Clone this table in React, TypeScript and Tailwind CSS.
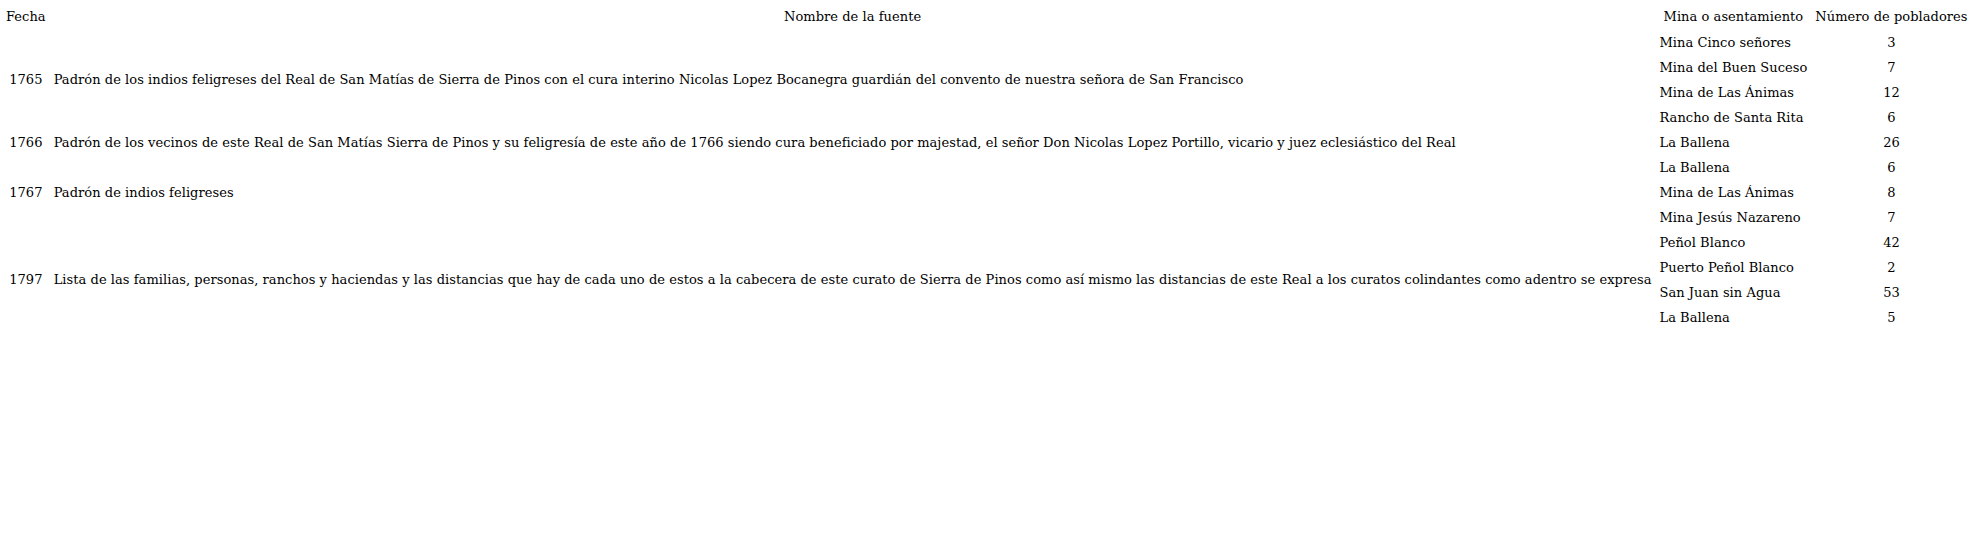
import React from "react";

type Row = { place: string; n: string };
type Group = { year: string; title: string; rows: Row[] };

const groups: Group[] = [
  {
    year: "1765",
    title:
      "Padrón de los indios feligreses del Real de San Matías de Sierra de Pinos con el cura interino Nicolas Lopez Bocanegra guardián del convento de nuestra señora de San Francisco",
    rows: [
      { place: "Mina Cinco señores", n: "3" },
      { place: "Mina del Buen Suceso", n: "7" },
      { place: "Mina de Las Ánimas", n: "12" },
      { place: "Rancho de Santa Rita", n: "6" },
    ],
  },
  {
    year: "1766",
    title:
      "Padrón de los vecinos de este Real de San Matías Sierra de Pinos y su feligresía de este año de 1766 siendo cura beneficiado por majestad, el señor Don Nicolas Lopez Portillo, vicario y juez eclesiástico del Real",
    rows: [{ place: "La Ballena", n: "26" }],
  },
  {
    year: "1767",
    title: "Padrón de indios feligreses",
    rows: [
      { place: "La Ballena", n: "6" },
      { place: "Mina de Las Ánimas", n: "8" },
      { place: "Mina Jesús Nazareno", n: "7" },
    ],
  },
  {
    year: "1797",
    title:
      "Lista de las familias, personas, ranchos y haciendas y las distancias que hay de cada uno de estos a la cabecera de este curato de Sierra de Pinos como así mismo las distancias de este Real a los curatos colindantes como adentro se expresa",
    rows: [
      { place: "Peñol Blanco", n: "42" },
      { place: "Puerto Peñol Blanco", n: "2" },
      { place: "San Juan sin Agua", n: "53" },
      { place: "La Ballena", n: "5" },
    ],
  },
];

export default function App() {
  return (
    <div className="w-[1975px] h-[554px] bg-white text-black overflow-hidden font-['DejaVu_Serif',serif] text-[13px] tracking-[0.05px] pt-[2px] pl-[1px]">
      <table className="border-separate border-spacing-[2px] whitespace-nowrap">
        <thead>
          <tr>
            <th className="font-normal px-[3px] h-[25px] text-center">Fecha</th>
            <th className="font-normal px-[3px] h-[25px] text-center">Nombre de la fuente</th>
            <th className="font-normal px-[3px] h-[25px] text-center">Mina o asentamiento</th>
            <th className="font-normal px-[3px] h-[25px] text-center">Número de pobladores</th>
          </tr>
        </thead>
        <tbody>
          {groups.map((g) =>
            g.rows.map((r, i) => (
              <tr key={g.year + i}>
                {i === 0 && (
                  <>
                    <td rowSpan={g.rows.length} className="px-[3px] text-center align-middle">
                      {g.year}
                    </td>
                    <td rowSpan={g.rows.length} className="px-[3px] text-left align-middle">
                      {g.title}
                    </td>
                  </>
                )}
                <td className="px-[3px] h-[23px] text-left">{r.place}</td>
                <td className="px-[3px] h-[23px] text-center">{r.n}</td>
              </tr>
            ))
          )}
        </tbody>
      </table>
    </div>
  );
}
